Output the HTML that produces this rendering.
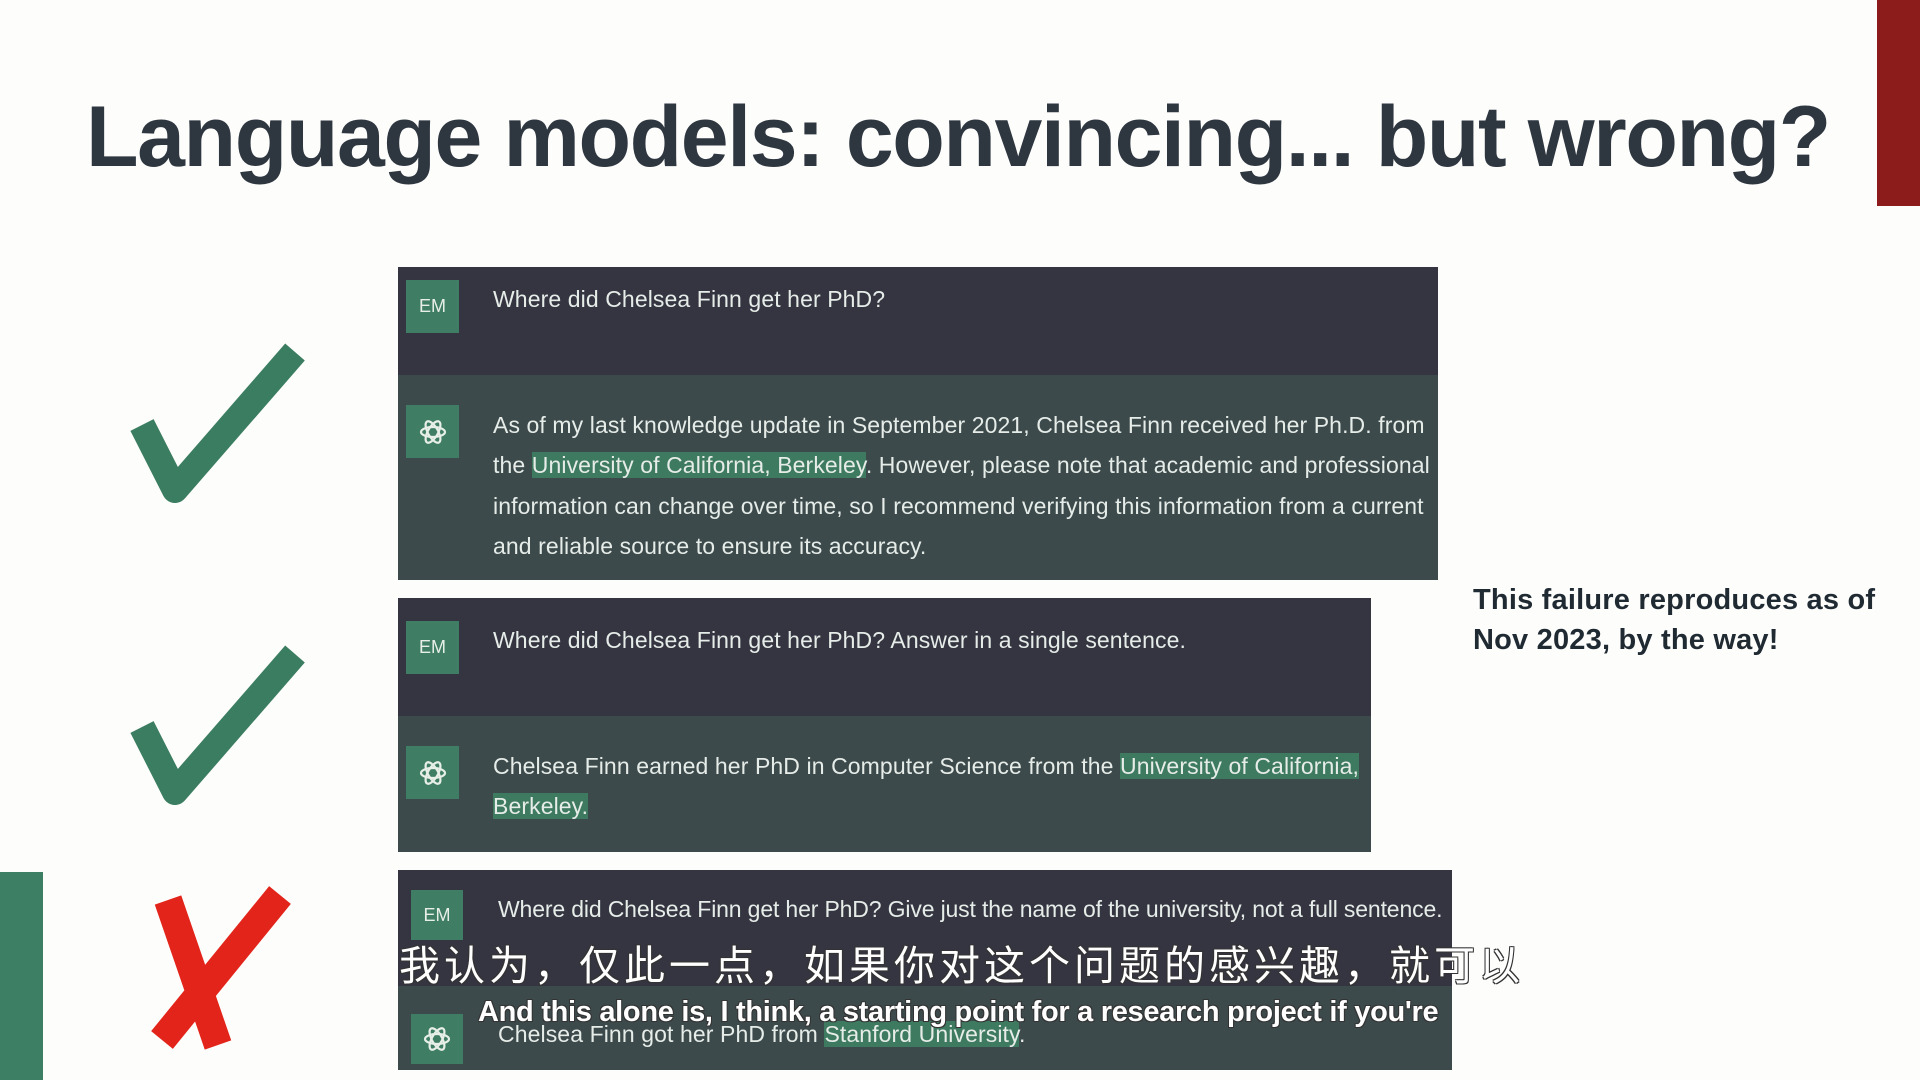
<!DOCTYPE html>
<html><head><meta charset="utf-8"><style>
*{margin:0;padding:0;box-sizing:border-box}
body{width:1920px;height:1080px;background:#fdfdfb;position:relative;overflow:hidden;font-family:"Liberation Sans",sans-serif}
.title{position:absolute;left:86px;top:88px;font-size:86px;font-weight:bold;color:#2e3640;white-space:nowrap;letter-spacing:-1.4px}
.panel{position:absolute;background:#3c4a4c}
.user{position:absolute;left:0;top:0;right:0;background:#343541}
.av{position:absolute;width:53px;height:53px;background:#3f7e64;color:#e8efe9;font-size:18px;display:flex;align-items:center;justify-content:center}
.t{position:absolute;color:#e6ece8;font-size:23px;white-space:nowrap;letter-spacing:0.1px}
.hl{background:#3e7a60}
.note{position:absolute;left:1473px;top:580px;font-size:29px;font-weight:bold;color:#1f2a33;line-height:40px;letter-spacing:0.2px}
.sub{position:absolute;color:#fff;white-space:nowrap;text-shadow:-1px -1px 0 #333,1px -1px 0 #333,-1px 1px 0 #333,1px 1px 0 #333}
</style></head><body>
<div class="title">Language models: convincing... but wrong?</div>
<div style="position:absolute;left:1877px;top:0;width:43px;height:206px;background:#8c1c1c"></div>
<div style="position:absolute;left:0;top:872px;width:43px;height:208px;background:#3d7f65"></div>

<svg style="position:absolute;left:130px;top:340px" width="175" height="170" viewBox="0 0 175 170"><path d="M12 85 L45 150 L165 12" fill="none" stroke="#3b7d61" stroke-width="26" stroke-linejoin="round"/></svg>
<svg style="position:absolute;left:130px;top:642px" width="175" height="170" viewBox="0 0 175 170"><path d="M12 85 L45 150 L165 12" fill="none" stroke="#3b7d61" stroke-width="26" stroke-linejoin="round"/></svg>
<svg style="position:absolute;left:140px;top:880px" width="155" height="180" viewBox="0 0 155 180"><path d="M28 20 L78 165 M140 15 L22 160" fill="none" stroke="#e3241b" stroke-width="28"/></svg>

<div class="panel" style="left:398px;top:267px;width:1040px;height:313px">
 <div class="user" style="height:108px"></div>
 <div class="av" style="left:8px;top:13px">EM</div>
 <div class="t" style="left:95px;top:19px">Where did Chelsea Finn get her PhD?</div>
 <div class="av" style="left:8px;top:138px"><svg width="30" height="30" viewBox="0 0 30 30"><g fill="none" stroke="#e8efe9" stroke-width="2.2"><ellipse cx="15" cy="15" rx="12" ry="5"/><ellipse cx="15" cy="15" rx="12" ry="5" transform="rotate(60 15 15)"/><ellipse cx="15" cy="15" rx="12" ry="5" transform="rotate(120 15 15)"/></g></svg></div>
 <div class="t" style="left:95px;top:145px">As of my last knowledge update in September 2021, Chelsea Finn received her Ph.D. from</div>
 <div class="t" style="left:95px;top:185px">the <span class="hl">University of California, Berkeley</span>. However, please note that academic and professional</div>
 <div class="t" style="left:95px;top:226px">information can change over time, so I recommend verifying this information from a current</div>
 <div class="t" style="left:95px;top:266px">and reliable source to ensure its accuracy.</div>
</div>

<div class="panel" style="left:398px;top:598px;width:973px;height:254px">
 <div class="user" style="height:118px"></div>
 <div class="av" style="left:8px;top:23px">EM</div>
 <div class="t" style="left:95px;top:29px">Where did Chelsea Finn get her PhD? Answer in a single sentence.</div>
 <div class="av" style="left:8px;top:148px"><svg width="30" height="30" viewBox="0 0 30 30"><g fill="none" stroke="#e8efe9" stroke-width="2.2"><ellipse cx="15" cy="15" rx="12" ry="5"/><ellipse cx="15" cy="15" rx="12" ry="5" transform="rotate(60 15 15)"/><ellipse cx="15" cy="15" rx="12" ry="5" transform="rotate(120 15 15)"/></g></svg></div>
 <div class="t" style="left:95px;top:155px">Chelsea Finn earned her PhD in Computer Science from the <span class="hl">University of California,</span></div>
 <div class="t" style="left:95px;top:195px"><span class="hl">Berkeley.</span></div>
</div>

<div class="panel" style="left:398px;top:870px;width:1054px;height:200px">
 <div class="user" style="height:116px"></div>
 <div class="av" style="left:13px;top:20px;width:52px;height:50px">EM</div>
 <div class="t" style="left:100px;top:26px;font-size:23px;letter-spacing:-0.15px">Where did Chelsea Finn get her PhD? Give just the name of the university, not a full sentence.</div>
 <div class="av" style="left:13px;top:144px;width:52px;height:50px"><svg width="30" height="30" viewBox="0 0 30 30"><g fill="none" stroke="#e8efe9" stroke-width="2.2"><ellipse cx="15" cy="15" rx="12" ry="5"/><ellipse cx="15" cy="15" rx="12" ry="5" transform="rotate(60 15 15)"/><ellipse cx="15" cy="15" rx="12" ry="5" transform="rotate(120 15 15)"/></g></svg></div>
 <div class="t" style="left:100px;top:151px;font-size:23px">Chelsea Finn got her PhD from <span class="hl">Stanford University</span>.</div>
</div>

<div class="note">This failure reproduces as of<br>Nov 2023, by the way!</div>

<div class="sub" style="left:399px;top:932px;font-size:41px;letter-spacing:4px;font-family:'Liberation Sans','Noto Sans CJK SC',sans-serif">我认为，仅此一点，如果你对这个问题的感兴趣，就可以</div>
<div class="sub" style="left:478px;top:996px;font-size:29px;font-weight:bold;letter-spacing:-0.3px">And this alone is, I think, a starting point for a research project if you're</div>
</body></html>
